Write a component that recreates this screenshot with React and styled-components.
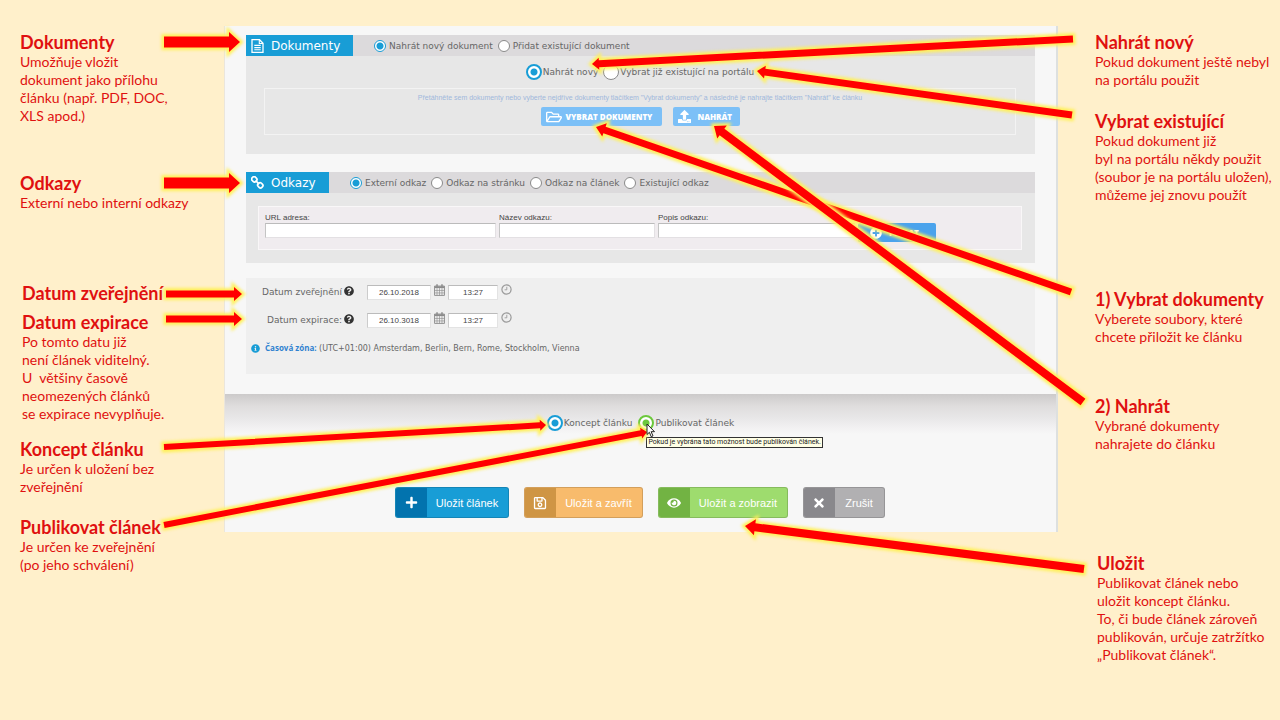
import styled, { createGlobalStyle } from "styled-components"
import {
  FaRegFolderOpen,
  FaUpload,
  FaPlusCircle,
  FaQuestionCircle,
  FaInfoCircle,
  FaPlus,
  FaRegSave,
  FaEye,
  FaTimes,
} from "react-icons/fa"

const leftNotes = [
  { title: "Dokumenty", gap: 31, lines: ["Umožňuje vložit", "dokument jako přílohu", "článku (např. PDF, DOC,", "XLS apod.)"] },
  { title: "Odkazy", gap: 47, lines: ["Externí nebo interní odkazy"] },
  { title: "Datum zveřejnění", gap: 70, indent: true, lines: [] },
  { title: "Datum expirace", gap: 7, indent: true, lines: ["Po tomto datu již", "není článek viditelný.", "U  většiny časově", "neomezených článků", "se expirace nevyplňuje."] },
  { title: "Koncept článku", gap: 15, lines: ["Je určen k uložení bez", "zveřejnění"] },
  { title: "Publikovat článek", gap: 20, lines: ["Je určen ke zveřejnění", "(po jeho schválení)"] },
]

const rightNotes = [
  { title: "Nahrát nový", gap: 31, lines: ["Pokud dokument ještě nebyl", "na portálu použit"] },
  { title: "Vybrat existující", gap: 21, lines: ["Pokud dokument již", "byl na portálu někdy použit", "(soubor je na portálu uložen),", "můžeme jej znovu použít"] },
  { title: "1) Vybrat dokumenty", gap: 84, lines: ["Vyberete soubory, které", "chcete přiložit ke článku"] },
  { title: "2) Nahrát", gap: 49, lines: ["Vybrané dokumenty", "nahrajete do článku"] },
  { title: "Uložit", gap: 99, indent: true, lines: ["Publikovat článek nebo", "uložit koncept článku.", "To, či bude článek zároveň", "publikován, určuje zatržítko", "„Publikovat článek“."] },
]

const arrows = [
  { from: [164, 42], to: [240, 42], shaft: 11, head: [11, 20] },
  { from: [164, 183], to: [240, 183], shaft: 11, head: [11, 20] },
  { from: [166, 294], to: [242, 294], shaft: 7, head: [8, 14] },
  { from: [166, 319], to: [242, 319], shaft: 7, head: [8, 14] },
  { from: [164, 447], to: [546, 425], shaft: 6, head: [6, 11] },
  { from: [164, 525], to: [647, 432], shaft: 6, head: [6, 11] },
  { from: [1073, 39], to: [592, 64], shaft: 7, head: [7, 12] },
  { from: [1072, 115], to: [757, 71], shaft: 7, head: [8, 13] },
  { from: [1071, 292], to: [596, 127], shaft: 7, head: [9, 14] },
  { from: [1083, 402], to: [714, 126], shaft: 8, head: [10, 16] },
  { from: [1084, 569], to: [745, 526], shaft: 8, head: [10, 16] },
]

const arrowPoints = ({ from, to, shaft, head }) => {
  const dx = to[0] - from[0]
  const dy = to[1] - from[1]
  const length = Math.hypot(dx, dy)
  const ux = dx / length
  const uy = dy / length
  const at = (along, side) =>
    `${from[0] + ux * along - uy * side},${from[1] + uy * along + ux * side}`
  const neck = length - head[0]
  return [
    at(0, -shaft / 2),
    at(neck, -shaft / 2),
    at(neck, -head[1] / 2),
    at(length, 0),
    at(neck, head[1] / 2),
    at(neck, shaft / 2),
    at(0, shaft / 2),
  ].join(" ")
}

const Arrows = () => (
  <ArrowLayer viewBox="0 0 1280 720" preserveAspectRatio="none" aria-hidden="true">
    <defs>
      <filter id="glow" filterUnits="userSpaceOnUse" x="0" y="0" width="1280" height="720" colorInterpolationFilters="sRGB">
        <feGaussianBlur stdDeviation="1.4" />
      </filter>
    </defs>
    {arrows.map((arrow) => {
      const points = arrowPoints(arrow)
      return (
        <g key={points}>
          <polygon points={points} fill="#fff05a" stroke="#fff05a" strokeWidth="5" filter="url(#glow)" />
          <polygon points={points} fill="#ff0000" />
        </g>
      )
    })}
  </ArrowLayer>
)

const FileIcon = () => (
  <svg width="13" height="14" viewBox="0 0 13 14" fill="none" stroke="#fff">
    <path d="M1 .7h7.5L12 4.2v9.1H1z" strokeWidth="1.3" />
    <path d="M8.3.9v3.6H12M3.3 6.4h6.4M3.3 8.6h6.4M3.3 10.8h6.4" strokeWidth="1.1" />
  </svg>
)

const ChainIcon = () => (
  <svg width="13" height="13" viewBox="0 0 13 13" fill="none" stroke="#fff" strokeWidth="1.7">
    <rect x="-2.6" y="-2.3" width="5.2" height="4.6" rx="2" transform="translate(3.3 3.3) rotate(45)" />
    <rect x="-2.6" y="-2.3" width="5.2" height="4.6" rx="2" transform="translate(9.3 9.3) rotate(45)" />
    <path d="M4.6 4.6l3.6 3.6" />
  </svg>
)

const CalendarIcon = () => (
  <svg width="11" height="12" viewBox="0 0 12 13" fill="none" stroke="#8b8b8b">
    <path d="M.6 2.2h10.8v10.2H.6z" />
    <path d="M.6 3.4h10.8" strokeWidth="2" />
    <path d="M.6 7h10.8M.6 9.7h10.8M3.3 4.4v8M6 4.4v8M8.7 4.4v8" strokeWidth=".7" />
    <path d="M3.3.3v2.6M8.7.3v2.6" strokeWidth="1.6" />
  </svg>
)

const ClockIcon = () => (
  <svg width="11" height="11" viewBox="0 0 11 11" fill="none" stroke="#9a9a9a">
    <circle cx="5.5" cy="5.5" r="4.6" strokeWidth="1.2" />
    <path d="M5.8 2.8v3H3.6" strokeWidth=".9" />
  </svg>
)

const Notes = ({ items }) =>
  items.map(({ title, gap, indent, lines }) => (
    <Note key={title} $gap={gap} $indent={indent}>
      <h2>{title}</h2>
      {lines.length > 0 && (
        <p>
          {lines.map((line) => (
            <span key={line}>{line}</span>
          ))}
        </p>
      )}
    </Note>
  ))

const Choice = ({ name, checked, size, color, children }) => (
  <ChoiceLabel $large={size === "large"}>
    <Radio type="radio" name={name} defaultChecked={checked} $large={size === "large"} $color={color} />
    {children}
  </ChoiceLabel>
)

const DateRow = ({ id, label, date }) => (
  <DateLine>
    <DateLabel htmlFor={id}>
      {label}
      <FaQuestionCircle size="10" color="#333" />
    </DateLabel>
    <DateInput id={id} defaultValue={date} />
    <CalendarIcon />
    <TimeInput aria-label={`${label} čas`} defaultValue="13:27" />
    <ClockIcon />
  </DateLine>
)

const App = () => {
  return (
    <>
      <GlobalStyle />
      <Slide>
        <Aside>
          <Notes items={leftNotes} />
        </Aside>
        <Editor>
          <Section>
            <SectionHead>
              <Tab $wide>
                <FileIcon />
                Dokumenty
              </Tab>
              <Choices>
                <Choice name="document" checked>Nahrát nový dokument</Choice>
                <Choice name="document">Přidat existující dokument</Choice>
              </Choices>
            </SectionHead>
            <UploadBody>
              <UploadChoices>
                <Choice name="upload" size="large" checked>Nahrát nový</Choice>
                <Choice name="upload" size="large">Vybrat již existující na portálu</Choice>
              </UploadChoices>
              <DropZone>
                <p>
                  Přetáhněte sem dokumenty nebo vyberte nejdříve dokumenty tlačítkem "Vybrat dokumenty" a následně je nahrajte tlačítkem "Nahrát" ke článku
                </p>
                <DropButtons>
                  <SmallButton type="button">
                    <FaRegFolderOpen size="16" />
                    VYBRAT DOKUMENTY
                  </SmallButton>
                  <SmallButton type="button" $spaced>
                    <FaUpload size="13" />
                    NAHRÁT
                  </SmallButton>
                </DropButtons>
              </DropZone>
            </UploadBody>
          </Section>

          <Section>
            <SectionHead>
              <Tab>
                <ChainIcon />
                Odkazy
              </Tab>
              <Choices>
                <Choice name="link" checked>Externí odkaz</Choice>
                <Choice name="link">Odkaz na stránku</Choice>
                <Choice name="link">Odkaz na článek</Choice>
                <Choice name="link">Existující odkaz</Choice>
              </Choices>
            </SectionHead>
            <LinkBody>
              <LinkForm>
                <Field $grow={231}>
                  URL adresa:
                  <input />
                </Field>
                <Field $grow={156}>
                  Název odkazu:
                  <input />
                </Field>
                <Field $grow={197}>
                  Popis odkazu:
                  <input />
                </Field>
                <AddButton type="button">
                  <FaPlusCircle size="12" />
                  PŘIDAT
                </AddButton>
              </LinkForm>
            </LinkBody>
          </Section>

          <Dates>
            <DateRow id="published" label="Datum zveřejnění" date="26.10.2018" />
            <DateRow id="expires" label="Datum expirace:" date="26.10.3018" />
            <Zone>
              <FaInfoCircle size="9" color="#189dd6" />
              <p>
                <strong>Časová zóna:</strong> (UTC+01:00) Amsterdam, Berlin, Bern, Rome, Stockholm, Vienna
              </p>
            </Zone>
          </Dates>

          <Bottom>
            <StateChoices>
              <Choice name="state" size="large" checked>Koncept článku</Choice>
              <Publish>
                <Radio type="radio" name="publish" id="publish" defaultChecked $large $color="#6cc83c" />
                <label htmlFor="publish">Publikovat článek</label>
                <Cursor viewBox="0 0 10 15" aria-hidden="true">
                  <path d="M1 1v10.5l2.4-2.2 1.8 4.4 1.8-.8-1.9-4.2h3.4z" fill="#fff" stroke="#222" />
                </Cursor>
                <Tooltip role="tooltip">Pokud je vybrána tato možnost bude publikován článek.</Tooltip>
              </Publish>
            </StateChoices>
            <Actions>
              <ActionButton type="button" $color="#189dd6" $dark="#0273ae" $width={114}>
                <i><FaPlus size="13" /></i>
                <span>Uložit článek</span>
              </ActionButton>
              <ActionButton type="button" $color="#f8bb6c" $dark="#cf9544" $width={119}>
                <i><FaRegSave size="14" /></i>
                <span>Uložit a zavřít</span>
              </ActionButton>
              <ActionButton type="button" $color="#9edc6e" $dark="#72b343" $width={130}>
                <i><FaEye size="14" /></i>
                <span>Uložit a zobrazit</span>
              </ActionButton>
              <ActionButton type="button" $color="#b1b0b2" $dark="#89888c" $width={82}>
                <i><FaTimes size="14" /></i>
                <span>Zrušit</span>
              </ActionButton>
            </Actions>
          </Bottom>
        </Editor>
        <Aside $right>
          <Notes items={rightNotes} />
        </Aside>
        <Arrows />
      </Slide>
    </>
  )
}

export default App

const GlobalStyle = createGlobalStyle`
  * {
    box-sizing: border-box;
  }

  body {
    margin: 0;
    background: #fff0cb;
    font-family: "DejaVu Sans", Verdana, sans-serif;
  }

  h1, h2, p {
    margin: 0;
  }

  button, input {
    font-family: inherit;
  }
`
const Slide = styled.main`
  position: relative;
  display: grid;
  grid-template-columns: 224px minmax(0, 1fr) 222px;
  align-items: start;
  min-height: 100vh;
`
const ArrowLayer = styled.svg`
  position: absolute;
  top: 0;
  left: 0;
  width: 100%;
  height: 720px;
  pointer-events: none;
`
const Aside = styled.aside`
  padding-left: ${({ $right }) => ($right ? "37px" : "20px")};
  color: #e01010;
  font-family: Lato, sans-serif;
  white-space: pre;
`
const Note = styled.section`
  padding-top: ${({ $gap }) => $gap}px;
  padding-left: ${({ $indent }) => ($indent ? "2px" : "0")};

  h2 {
    font-size: 18px;
    line-height: 22px;
    font-weight: 700;
  }

  p {
    font-size: 14px;
    line-height: 18px;
  }

  span {
    display: block;
  }
`
const Editor = styled.form`
  display: flex;
  flex-direction: column;
  margin-top: 26px;
  padding-top: 9px;
  background: #f7f7f7;
  border-left: 1px solid #ebe6dc;
  border-right: 2px solid #dde0df;
`
const Section = styled.section`
  margin: 0 21px 18px;
  background: #e7e7e7;
`
const SectionHead = styled.header`
  display: flex;
  height: 21px;
  background: #dcdadc;
`
const Tab = styled.h2`
  display: flex;
  align-items: center;
  gap: 7px;
  width: ${({ $wide }) => ($wide ? "107px" : "83px")};
  padding-left: 5px;
  background: #189dd6;
  color: #fff;
  font-size: 12px;
  font-weight: 400;
`
const Choices = styled.div`
  display: flex;
  align-items: center;
  gap: 5px;
  padding-left: 21px;
`
const ChoiceLabel = styled.label`
  display: flex;
  align-items: center;
  gap: ${({ $large }) => ($large ? "1px" : "3px")};
  color: #666;
  font-size: 9px;
  white-space: nowrap;
`
const Radio = styled.input`
  appearance: none;
  flex: none;
  width: ${({ $large }) => ($large ? "16px" : "12px")};
  height: ${({ $large }) => ($large ? "16px" : "12px")};
  margin: 0;
  border: 1px solid #8a8a8a;
  border-radius: 50%;
  background: #fff;

  &:checked {
    border: ${({ $large }) => ($large ? "2px" : "1px")} solid ${({ $color }) => $color || "#189dd6"};
    background: radial-gradient(
      circle,
      ${({ $color }) => $color || "#189dd6"} 3px,
      #fff 4px
    );
  }
`
const UploadBody = styled.div`
  padding: 8px 19px 19px 18px;
`
const UploadChoices = styled.div`
  display: flex;
  justify-content: center;
  gap: 5px;
  height: 24px;
  padding-bottom: 8px;
`
const DropZone = styled.div`
  display: flex;
  flex-direction: column;
  align-items: center;
  height: 47px;
  border: 1px solid #f3f3f3;
  padding-top: 3px;

  p {
    color: #9fb8dc;
    font-family: "Liberation Sans", Arial, sans-serif;
    font-size: 7px;
    line-height: 12px;
    white-space: nowrap;
  }
`
const DropButtons = styled.div`
  display: flex;
  gap: 11px;
  padding-top: 3px;
`
const SmallButton = styled.button`
  display: flex;
  align-items: center;
  gap: ${({ $spaced }) => ($spaced ? "7px" : "4px")};
  width: ${({ $spaced }) => ($spaced ? "67px" : "121px")};
  height: 19px;
  padding: 0 5px;
  border: 0;
  border-radius: 2px;
  background: #7cc0f7;
  color: #fff;
  font-family: "Open Sans", sans-serif;
  font-size: 8px;
  font-weight: 800;
  white-space: nowrap;

  svg {
    flex: none;
  }
`
const LinkBody = styled.div`
  padding: 13px 13px 13px 12px;
`
const LinkForm = styled.div`
  display: flex;
  align-items: flex-end;
  gap: 3px;
  height: 44px;
  padding: 0 85px 11px 6px;
  border: 1px solid #f9f7f8;
  background: #f0ecef;
`
const Field = styled.label`
  display: flex;
  flex-direction: column;
  flex: ${({ $grow }) => $grow} 1 0;
  min-width: 0;
  color: #444;
  font-family: "Liberation Sans", Arial, sans-serif;
  font-size: 8px;
  line-height: 11px;

  input {
    width: 100%;
    height: 15px;
    border: 1px solid #e3e0e3;
    border-top-color: #bbb;
    border-left-color: #c4c4c4;
    background: #fff;
  }
`
const AddButton = styled.button`
  display: flex;
  align-items: center;
  gap: 7px;
  width: 78px;
  height: 19px;
  margin-bottom: -4px;
  padding: 0 12px;
  border: 0;
  border-radius: 2px;
  background: #4ba3ec;
  color: #fff;
  font-family: "Open Sans", sans-serif;
  font-size: 8px;
  font-weight: 800;
`
const Dates = styled.section`
  height: 96px;
  margin: -3px 21px 20px;
  background: #efefef;
`
const DateLine = styled.div`
  display: flex;
  align-items: center;
  gap: 3px;
  height: 28px;

  > svg {
    flex: none;
    margin-bottom: 4px;
  }

  > svg:last-child {
    margin-bottom: 5px;
  }
`
const DateLabel = styled.label`
  display: flex;
  justify-content: flex-end;
  align-items: center;
  gap: 2px;
  width: 108px;
  margin-right: 10px;
  color: #666;
  font-size: 9px;
  white-space: nowrap;

  svg {
    margin-bottom: 2px;
  }
`
const DateInput = styled.input`
  width: 64px;
  height: 15px;
  padding: 0;
  border: 1px solid #e3e3e3;
  border-top-color: #bbb;
  border-left-color: #ccc;
  background: #fff;
  color: #444;
  font-size: 8px;
  font-family: "Liberation Sans", Arial, sans-serif;
  text-align: center;
`
const TimeInput = styled(DateInput)`
  width: 50px;
`
const Zone = styled.div`
  display: flex;
  align-items: center;
  gap: 5px;
  padding: 8px 0 0 5px;
  color: #666;
  font-size: 8px;
  line-height: 12px;

  svg {
    flex: none;
  }

  strong {
    color: #2f82cf;
    font-family: "Open Sans", sans-serif;
  }
`
const Bottom = styled.footer`
  height: 138px;
  background: linear-gradient(#cccaca, #dfdddd 12px, #e8e7e8 24px, #f2f1f2 34px, #f7f7f7 40px);
`
const StateChoices = styled.div`
  display: flex;
  justify-content: center;
  gap: 6px;
  padding-top: 21px;
`
const Publish = styled.div`
  position: relative;
  display: flex;
  align-items: center;
  gap: 1px;
  color: #666;
  font-size: 9px;
  white-space: nowrap;
`
const Cursor = styled.svg`
  position: absolute;
  top: 8px;
  left: 8px;
  width: 10px;
  height: 15px;
  z-index: 2;
`
const Tooltip = styled.span`
  position: absolute;
  top: 22px;
  left: 8px;
  padding: 0 1px;
  border: 1px solid #333;
  background: #ffffe6;
  color: #222;
  font-family: Roboto, sans-serif;
  font-size: 7px;
  line-height: 9px;
`
const Actions = styled.div`
  display: flex;
  justify-content: center;
  gap: 15px;
  padding: 56px 2px 0 0;
`
const ActionButton = styled.button`
  display: flex;
  width: ${({ $width }) => $width}px;
  height: 31px;
  padding: 0;
  border: 1px solid rgba(0, 0, 0, 0.15);
  border-radius: 3px;
  overflow: hidden;
  background: ${({ $color }) => $color};
  color: #fff;
  font-family: "Liberation Sans", Arial, sans-serif;
  font-size: 11px;
  white-space: nowrap;

  i {
    display: grid;
    place-items: center;
    flex: none;
    width: 31px;
    height: 100%;
    background: ${({ $dark }) => $dark};
  }

  span {
    flex: 1;
    align-self: center;
  }
`
